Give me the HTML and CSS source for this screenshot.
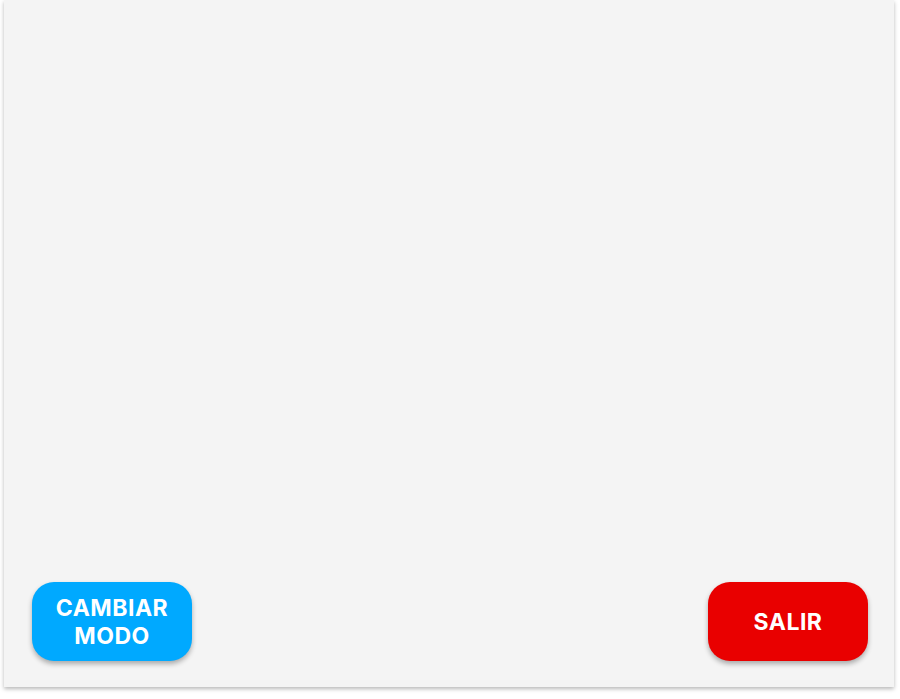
FILE: index.html
```html
<!DOCTYPE html>
<html lang="es">
<head>
<meta charset="utf-8">
<link rel="stylesheet" href="styles.css">
</head>
<body>
<div class="panel">
  <div class="actions">
    <button class="btn btn-mode">CAMBIAR<br>MODO</button>
    <button class="btn btn-exit">SALIR</button>
  </div>
</div>
</body>
</html>
```
FILE: styles.css
```css
html, body {
  margin: 0;
  padding: 0;
  background: #ffffff;
}
body {
  width: 900px;
  height: 699px;
  overflow: hidden;
  font-family: Inter, Roboto, "Liberation Sans", sans-serif;
}
.panel {
  margin-left: 4px;
  width: 890px;
  height: 687px;
  background: #f4f4f4;
  box-shadow: 0 2px 4px rgba(0, 0, 0, 0.28);
  display: flex;
  flex-direction: column;
  justify-content: flex-end;
}
.actions {
  display: flex;
  justify-content: space-between;
  padding: 0 26px 26px 28px;
}
.btn {
  width: 160px;
  height: 79px;
  border: none;
  border-radius: 22px;
  color: #ffffff;
  font-family: Inter, Roboto, "Liberation Sans", sans-serif;
  font-weight: 700;
  font-size: 23px;
  line-height: 28px;
  letter-spacing: 0.5px;
  box-shadow: 0 3px 5px rgba(0, 0, 0, 0.3);
  padding: 0;
}
.btn-mode {
  background: #00a9ff;
}
.btn-exit {
  background: #e90000;
}
```
